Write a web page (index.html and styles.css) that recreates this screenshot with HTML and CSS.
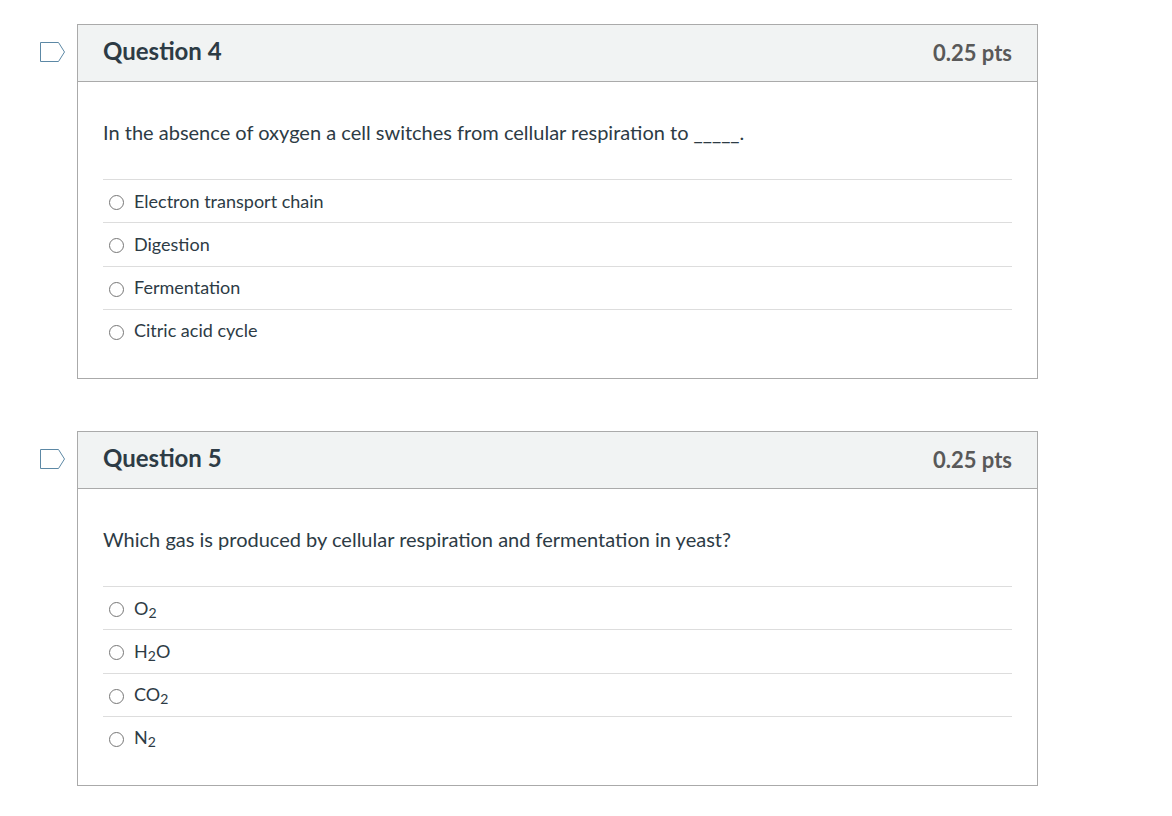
FILE: index.html
```html
<!DOCTYPE html>
<html lang="en">
<head>
    <meta charset="UTF-8">
    <meta name="viewport" content="width=device-width, initial-scale=1.0">
    <title>Quiz</title>
    <link rel="stylesheet" href="styles.css">
</head>
<body>
    <form class="quiz">
        <div class="question-row">
            <button type="button" class="flag" aria-label="Flag question 4">
                <svg width="26" height="22" viewBox="0 0 26 22">
                    <path d="M.5 1.5H18.5L24.5 11L18.5 20.5H.5Z"/>
                </svg>
            </button>
            <section class="question">
                <div class="question-header">
                    <h2>Question 4</h2>
                    <span class="points">0.25 pts</span>
                </div>
                <div class="question-body">
                    <p class="question-text">In the absence of oxygen a cell switches from cellular respiration to _____.</p>
                    <div class="answers">
                        <label class="answer"><input type="radio" name="question4"><span>Electron transport chain</span></label>
                        <label class="answer"><input type="radio" name="question4"><span>Digestion</span></label>
                        <label class="answer"><input type="radio" name="question4"><span>Fermentation</span></label>
                        <label class="answer"><input type="radio" name="question4"><span>Citric acid cycle</span></label>
                    </div>
                </div>
            </section>
        </div>

        <div class="question-row">
            <button type="button" class="flag" aria-label="Flag question 5">
                <svg width="26" height="22" viewBox="0 0 26 22">
                    <path d="M.5 1.5H18.5L24.5 11L18.5 20.5H.5Z"/>
                </svg>
            </button>
            <section class="question">
                <div class="question-header">
                    <h2>Question 5</h2>
                    <span class="points">0.25 pts</span>
                </div>
                <div class="question-body">
                    <p class="question-text">Which gas is produced by cellular respiration and fermentation in yeast?</p>
                    <div class="answers">
                        <label class="answer"><input type="radio" name="question5"><span>O<sub>2</sub></span></label>
                        <label class="answer"><input type="radio" name="question5"><span>H<sub>2</sub>O</span></label>
                        <label class="answer"><input type="radio" name="question5"><span>CO<sub>2</sub></span></label>
                        <label class="answer"><input type="radio" name="question5"><span>N<sub>2</sub></span></label>
                    </div>
                </div>
            </section>
        </div>
    </form>
</body>
</html>
```
FILE: styles.css
```css
* {
    box-sizing: border-box;
}
body {
    margin: 0;
    background-color: #fff;
    color: #2d3b45;
    font-family: Lato, "Liberation Sans", sans-serif;
}
.quiz {
    display: flex;
    flex-direction: column;
    gap: 52px;
    padding: 24px 134px 24px 40px;
}
.question-row {
    display: flex;
    align-items: flex-start;
    gap: 11px;
}
.flag {
    flex: none;
    margin: 17px 0 0;
    padding: 0;
    border: none;
    background: none;
    cursor: pointer;
}
.flag svg {
    display: block;
    fill: #fff;
    stroke: #5c88a5;
}
.question {
    flex: 1;
    min-width: 0;
    border: 1px solid #aaa;
}
.question-header {
    display: flex;
    justify-content: space-between;
    align-items: flex-end;
    padding: 11px 25px 13px;
    border-bottom: 1px solid #aaa;
    background-color: #f1f3f3;
}
.question-header h2 {
    margin: 0 0 2px;
    font-size: 24px;
    line-height: 30px;
}
.points {
    color: #595959;
    font-size: 22px;
    font-weight: bold;
    line-height: 30px;
}
.question-body {
    padding: 35px 25px 26px;
}
.question-text {
    margin: 0 0 32px;
    font-size: 20px;
    line-height: 30px;
}
.answers {
    display: grid;
    grid-auto-rows: 1fr;
    min-height: 173px;
}
.answer {
    display: flex;
    align-items: center;
    gap: 10px;
    padding: 0 6px;
    border-top: 1px solid #ddd;
    font-size: 18px;
    line-height: 24px;
    cursor: pointer;
}
.answer input {
    width: 15px;
    height: 15px;
    margin: 3px 0 0;
}
.answer span {
    padding-bottom: 1px;
}
.answer sub {
    font-size: 14px;
    line-height: 0;
    vertical-align: -3px;
}
```
